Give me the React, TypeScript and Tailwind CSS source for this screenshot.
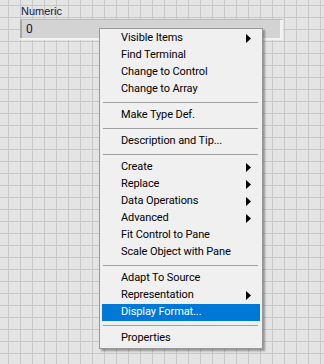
import React from "react";

type Item = { label: string; arrow?: boolean; selected?: boolean } | "sep";

const items: Item[] = [
  { label: "Visible Items", arrow: true },
  { label: "Find Terminal" },
  { label: "Change to Control" },
  { label: "Change to Array" },
  "sep",
  { label: "Make Type Def." },
  "sep",
  { label: "Description and Tip..." },
  "sep",
  { label: "Create", arrow: true },
  { label: "Replace", arrow: true },
  { label: "Data Operations", arrow: true },
  { label: "Advanced", arrow: true },
  { label: "Fit Control to Pane" },
  { label: "Scale Object with Pane" },
  "sep",
  { label: "Adapt To Source" },
  { label: "Representation", arrow: true },
  { label: "Display Format...", selected: true },
  "sep",
  { label: "Properties" },
];

function Arrow({ white }: { white?: boolean }) {
  return (
    <svg width="5" height="9" viewBox="0 0 5 9" className="shrink-0">
      <path d="M0 0 L5 4.5 L0 9 Z" fill={white ? "#ffffff" : "#000000"} />
    </svg>
  );
}

export default function App() {
  return (
    <div className="relative w-[324px] h-[364px] overflow-hidden bg-[#e4e4e4] bg-[linear-gradient(to_right,#c8c8c8_1px,transparent_1px),linear-gradient(to_bottom,#c8c8c8_1px,transparent_1px)] bg-[size:12px_12px] bg-[position:8px_5px] font-['Roboto',sans-serif]">
      <div className="pl-[20px] pt-[4px] flex flex-col">
        <div className="pl-[1px] text-[11px] leading-[14px] text-[#151545] font-['Liberation_Sans',sans-serif]">Numeric</div>
        <div className="w-[263px] h-[21px] mt-[1px] flex flex-col">
          <div className="h-[2px] bg-[#bdbdbd]" />
          <div className="flex-1 flex">
            <div className="w-[2px] bg-[#a8a8a8]" />
            <div className="flex-1 bg-[#d3d3d3] flex items-center pl-[4px] text-[12px] text-[#151545]">0</div>
            <div className="w-[3px] bg-[#f2f2f2]" />
          </div>
          <div className="h-[3px] bg-[#f2f2f2]" />
        </div>
      </div>

      <div className="absolute left-[99px] top-[28px] w-[164px] shadow-[2px_2px_2px_rgba(0,0,0,0.35)]">
        <div className="border border-[#979797] bg-[#f0f0f0] pt-[1px] pb-[1px] px-[2px] flex flex-col">
          {items.map((it, i) =>
            it === "sep" ? (
              <div key={i} className="h-[9px] flex items-center pl-[1px] pr-[2px]">
                <div className="h-[1px] w-full bg-[#a0a0a0]" />
              </div>
            ) : (
              <div
                key={i}
                className={`h-[17px] flex items-center justify-between pl-[19px] pr-[9px] text-[11px] tracking-[-0.1px] ${
                  it.selected ? "bg-[#0078d7] text-white" : "text-black"
                }`}
              >
                <span className="whitespace-nowrap">{it.label}</span>
                {it.arrow && <Arrow white={it.selected} />}
              </div>
            )
          )}
        </div>
      </div>
    </div>
  );
}
